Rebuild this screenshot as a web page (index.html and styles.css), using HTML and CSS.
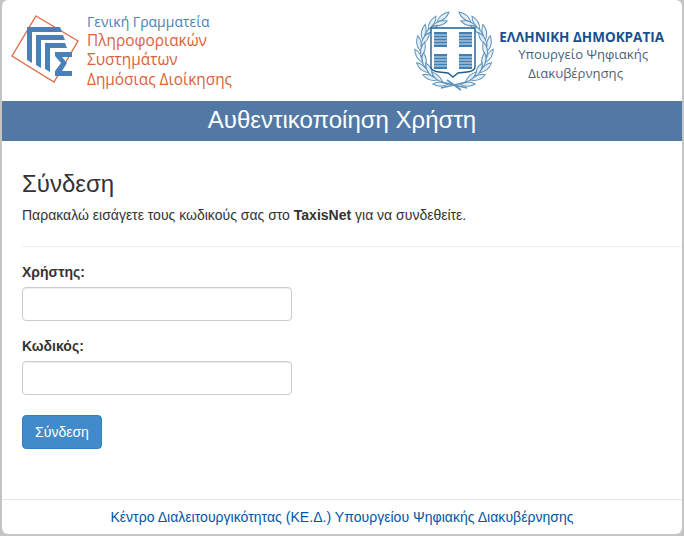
FILE: index.html
```html
<!DOCTYPE html>
<html lang="el">
<head>
<meta charset="UTF-8">
<title>Αυθεντικοποίηση Χρήστη</title>
<link rel="stylesheet" href="styles.css">
</head>
<body>
<div class="card">
  <div class="logos">
    <div class="logo-left">
      <svg class="gsis-mark" width="72" height="72" viewBox="0 0 72 72">
        <path d="M26 3 L68 28 L44 69 L2 43 Z" fill="none" stroke="#e0704a" stroke-width="1.4"/>
        <path d="M17 47 V14 H50 L52 19 H22 V50 Z" fill="#4a80b8"/>
        <path d="M26 52 V22 H53 L55 27 H31 V55 Z" fill="#4a80b8"/>
        <path d="M35 56 V30 H55 L57 35 H40 V59 Z" fill="#4a80b8"/>
        <path d="M45 39 H62 V44 H52 L57 50 L52 58 H62 V63 H45 V58 L51 50 L45 43 Z" fill="#4a80b8"/>
      </svg>
      <div class="gsis-text">
        <div class="blue">Γενική Γραμματεία</div>
        <div>Πληροφοριακών</div>
        <div>Συστημάτων</div>
        <div>Δημόσιας Διοίκησης</div>
      </div>
    </div>
    <div class="logo-right">
      <svg class="emblem" width="80" height="80" viewBox="0 0 80 80">
        <defs>
          <path id="leaf" d="M45 7 Q39 0 30 2 Q35 8 45 7 Z" fill="#e6eff5" stroke="#5f93bb" stroke-width="1"/>
          <path id="leaf-in" d="M45 7 Q38 13 30 11 Q36 5 45 7 Z" fill="#e6eff5" stroke="#5f93bb" stroke-width="1"/>
        </defs>
        <use href="#leaf" transform="rotate(22 40 40)"/>
        <use href="#leaf" transform="rotate(42 40 40)"/>
        <use href="#leaf" transform="rotate(62 40 40)"/>
        <use href="#leaf" transform="rotate(82 40 40)"/>
        <use href="#leaf" transform="rotate(102 40 40)"/>
        <use href="#leaf" transform="rotate(122 40 40)"/>
        <use href="#leaf" transform="rotate(142 40 40)"/>
        <use href="#leaf" transform="rotate(162 40 40)"/>
        <use href="#leaf-in" transform="rotate(32 40 40)"/>
        <use href="#leaf-in" transform="rotate(52 40 40)"/>
        <use href="#leaf-in" transform="rotate(72 40 40)"/>
        <use href="#leaf-in" transform="rotate(92 40 40)"/>
        <use href="#leaf-in" transform="rotate(112 40 40)"/>
        <use href="#leaf-in" transform="rotate(132 40 40)"/>
        <use href="#leaf-in" transform="rotate(152 40 40)"/>
        <use href="#leaf" transform="rotate(-22 40 40) scale(-1 1) translate(-80 0)"/>
        <use href="#leaf" transform="rotate(-42 40 40) scale(-1 1) translate(-80 0)"/>
        <use href="#leaf" transform="rotate(-62 40 40) scale(-1 1) translate(-80 0)"/>
        <use href="#leaf" transform="rotate(-82 40 40) scale(-1 1) translate(-80 0)"/>
        <use href="#leaf" transform="rotate(-102 40 40) scale(-1 1) translate(-80 0)"/>
        <use href="#leaf" transform="rotate(-122 40 40) scale(-1 1) translate(-80 0)"/>
        <use href="#leaf" transform="rotate(-142 40 40) scale(-1 1) translate(-80 0)"/>
        <use href="#leaf" transform="rotate(-162 40 40) scale(-1 1) translate(-80 0)"/>
        <use href="#leaf-in" transform="rotate(-32 40 40) scale(-1 1) translate(-80 0)"/>
        <use href="#leaf-in" transform="rotate(-52 40 40) scale(-1 1) translate(-80 0)"/>
        <use href="#leaf-in" transform="rotate(-72 40 40) scale(-1 1) translate(-80 0)"/>
        <use href="#leaf-in" transform="rotate(-92 40 40) scale(-1 1) translate(-80 0)"/>
        <use href="#leaf-in" transform="rotate(-112 40 40) scale(-1 1) translate(-80 0)"/>
        <use href="#leaf-in" transform="rotate(-132 40 40) scale(-1 1) translate(-80 0)"/>
        <use href="#leaf-in" transform="rotate(-152 40 40) scale(-1 1) translate(-80 0)"/>
        <path d="M27 71 L53 77 M27 77 L53 71 M33 69 L47 79" stroke="#5f93bb" stroke-width="1.6" fill="none"/>
        <path d="M17 17 H61 V56 Q61 60 53 61 L44 62 L39 66 L34 62 L25 61 Q17 60 17 56 Z" fill="#fff" stroke="#1d5f96" stroke-width="1.4"/>
        <path d="M20 21 H33 V36 H20 Z M45 21 H58 V36 H45 Z M20 43 H33 V58 H20 Z M45 43 H58 V58 H45 Z" fill="#3f7fb3"/>
        <path d="M20 24 H33 M20 27 H33 M20 30 H33 M20 33 H33 M45 24 H58 M45 27 H58 M45 30 H58 M45 33 H58 M20 46 H33 M20 49 H33 M20 52 H33 M20 55 H33 M45 46 H58 M45 49 H58 M45 52 H58 M45 55 H58" stroke="#d6e4ef" stroke-width="1"/>
      </svg>
      <div class="ministry">
        <div class="country">ΕΛΛΗΝΙΚΗ ΔΗΜΟΚΡΑΤΙΑ</div>
        <div class="min-line1">Υπουργείο Ψηφιακής</div>
        <div class="min-line2">Διακυβέρνησης</div>
      </div>
    </div>
  </div>

  <div class="banner">Αυθεντικοποίηση Χρήστη</div>

  <div class="content">
    <h3>Σύνδεση</h3>
    <p>Παρακαλώ εισάγετε τους κωδικούς σας στο <b>TaxisNet</b> για να συνδεθείτε.</p>
    <hr>
    <form>
      <div class="form-group">
        <label for="user">Χρήστης:</label>
        <input id="user" type="text">
      </div>
      <div class="form-group">
        <label for="pass">Κωδικός:</label>
        <input id="pass" type="password">
      </div>
      <button type="button" class="btn">Σύνδεση</button>
    </form>
  </div>

  <div class="footer"><a href="#">Κέντρο Διαλειτουργικότητας (ΚΕ.Δ.) Υπουργείου Ψηφιακής Διακυβέρνησης</a></div>
</div>
</body>
</html>
```

FILE: styles.css
```css
* {
    box-sizing: border-box;
}
html, body {
    height: 100%;
}
body {
    margin: 0;
    padding: 0 2px 2px 2px;
    background-color: #c4c4c4;
    font-family: "Liberation Sans", Arial, sans-serif;
    font-size: 14px;
    line-height: 20px;
    color: #333;
    overflow: hidden;
}
.card {
    display: flex;
    flex-direction: column;
    height: 534px;
    background-color: #fff;
    border-radius: 6px;
    overflow: hidden;
}

/* logos */
.logos {
    display: flex;
    justify-content: space-between;
    height: 99px;
}
.logo-left {
    display: flex;
    padding: 13px 0 0 8px;
}
.gsis-mark {
    flex-shrink: 0;
}
.gsis-text {
    margin: -1px 0 0 5px;
    font-family: "Open Sans", sans-serif;
    font-size: 15.4px;
    line-height: 19.2px;
    color: #d9623d;
}
.gsis-text .blue {
    color: #4a80b8;
    font-size: 14px;
}
.logo-right {
    display: flex;
    padding: 11px 18px 0 0;
}
.emblem {
    flex-shrink: 0;
    margin-right: 5px;
}
.ministry {
    padding-top: 17px;
    font-family: "Open Sans", sans-serif;
    font-size: 13.1px;
    color: #4a5f78;
}
.country {
    font-weight: 700;
    color: #17508f;
    font-size: 13.5px;
    line-height: 18px;
}
.min-line1 {
    padding-left: 19px;
    line-height: 17px;
}
.min-line2 {
    padding-left: 29px;
    line-height: 20px;
}

.banner {
    margin-top: 2px;
    height: 40px;
    background-color: #5279a5;
    color: #fff;
    font-size: 24px;
    line-height: 38px;
    text-align: center;
}

/* form */
.content {
    flex: 1;
    padding: 30px 0 0 20px;
}
h3 {
    margin: 0 0 8px 0;
    font-size: 24px;
    font-weight: 400;
    line-height: 26px;
}
p {
    margin: 0;
}
hr {
    margin: 21px 0 15px 0;
    border: 0;
    border-top: 1px solid #eee;
}
label {
    display: block;
    margin-bottom: 5px;
    font-weight: 700;
}
.form-group {
    margin-bottom: 15px;
}
input {
    display: block;
    width: 270px;
    height: 34px;
    padding: 6px 12px;
    border: 1px solid #ccc;
    border-radius: 4px;
    background-color: #fff;
    box-shadow: inset 0 1px 1px rgba(0, 0, 0, 0.075);
}
.btn {
    display: block;
    width: 80px;
    height: 34px;
    margin-top: 20px;
    padding: 0;
    border: 1px solid #357ebd;
    border-radius: 4px;
    background-color: #428bca;
    color: #fff;
    font-family: inherit;
    font-size: 14px;
}

.footer {
    height: 35px;
    padding-top: 7px;
    border-top: 1px solid #e7e7e7;
    text-align: center;
}
.footer a {
    color: #0056a6;
    text-decoration: none;
    letter-spacing: 0.03px;
}
```
